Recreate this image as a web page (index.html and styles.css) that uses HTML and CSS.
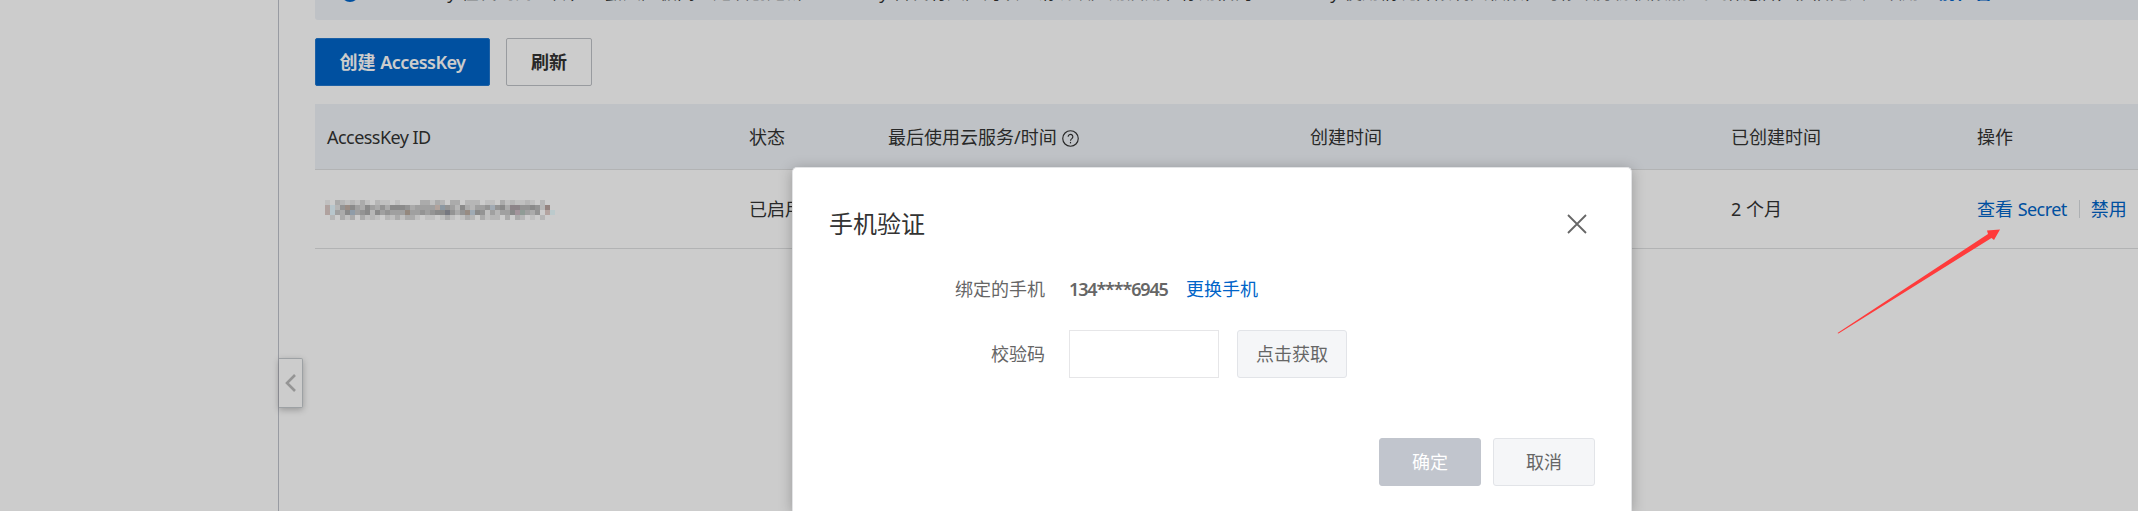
FILE: index.html
```html
<!DOCTYPE html>
<html lang="zh-CN">
<head>
    <meta charset="UTF-8">
    <meta name="viewport" content="width=device-width, initial-scale=1.0">
    <title>AccessKey 管理</title>
    <link rel="stylesheet" href="styles.css">
</head>
<body>
    <div class="page">
        <aside class="sidebar"></aside>
        <main class="content">
            <div class="notice">
                <span class="notice-icon"></span>
                <p class="notice-text"><span class="part"><span class="en">AccessKey</span> 在代码网上传，泄露风险极高。建议创建新</span><span class="part part-2"><span class="en">AccessKey</span> 替代有风险的项。请确认应用启用和停用旧的</span><span class="part"><span class="en">AccessKey</span> 使用情况并限制其权限，可修改身份权限加上控措施后，依旧无法继续用。<a href="#">前往管理</a></span></p>
            </div>

            <div class="toolbar">
                <button class="btn btn-primary">创建 <span class="en">AccessKey</span></button>
                <button class="btn btn-normal">刷新</button>
            </div>

            <div class="table">
                <div class="row head">
                    <div class="cell"><span class="en">AccessKey ID</span></div>
                    <div class="cell">状态</div>
                    <div class="cell">最后使用云服务/时间
                        <svg class="help" viewBox="0 0 16 16">
                            <circle cx="8" cy="8" r="7.3"/>
                            <path d="M5.8 6.3a2.2 2.2 0 1 1 3.5 1.8C8.3 8.8 8 9.1 8 10"/>
                            <path d="M8 11.2v1.4"/>
                        </svg>
                    </div>
                    <div class="cell">创建时间</div>
                    <div class="cell">已创建时间</div>
                    <div class="cell">操作</div>
                </div>
                <div class="row">
                    <div class="cell"><svg id="maskedId" class="masked" width="230" height="20"></svg></div>
                    <div class="cell">已启用</div>
                    <div class="cell"></div>
                    <div class="cell"></div>
                    <div class="cell">2 个月</div>
                    <div class="cell actions"><a href="#">查看 <span class="en">Secret</span></a><i class="divider"></i><a href="#">禁用</a></div>
                </div>
            </div>
        </main>
        <div class="collapse">
            <svg width="12" height="20" viewBox="0 0 12 20"><path d="M10 2L2 10l8 8"/></svg>
        </div>
    </div>

    <!-- Backdrop -->
    <div class="overlay"></div>

    <!-- Dialog -->
    <div class="dialog">
        <div class="dialog-header">
            <h2>手机验证</h2>
            <svg class="close" width="20" height="20" viewBox="0 0 20 20"><path d="M1 1l18 18M19 1L1 19"/></svg>
        </div>
        <div class="form">
            <div class="form-row phone-row">
                <label>绑定的手机</label>
                <b class="phone">134****6945</b>
                <a href="#">更换手机</a>
            </div>
            <div class="form-row">
                <label>校验码</label>
                <input type="text" class="code">
                <button class="btn2 btn-get">点击获取</button>
            </div>
        </div>
        <div class="dialog-footer">
            <button class="btn2 btn-ok">确定</button>
            <button class="btn2">取消</button>
        </div>
    </div>

    <svg class="arrow" width="164" height="105" viewBox="0 0 164 105">
        <path d="M0.5 104L151 5L150 1.500L163 0.500L157 11L154.500 9L1.500 104.500Z"/>
    </svg>

    <script>
        // Mosaic over the key id, one digit per 5px block
        const rows = [
            '1032121310211010000331320330222011031211210202',
            '4125364364353666534444555426324453563425565254',
            '4143634562645444544545663535576514244625435052',
            '0203130312102131331011013101320312203032010201'
        ];
        // warm / cool tints
        const tints = { '0,1': '#b0a29f', '0,2': '#b0a29f', '1,1': '#b9c6d0', '1,2': '#b9c6d0', '4,1': '#9a8d84', '5,2': '#8f9ca8', '16,2': '#94897e', '22,1': '#b2a39d', '23,1': '#8d98a2', '24,2': '#767980', '28,2': '#978b82', '29,2': '#9faab5', '33,1': '#a2abb4', '37,1': '#8c8488', '38,1': '#8c8488', '38,2': '#a3949b', '39,2': '#909d96', '44,1': '#94837f', '44,2': '#b5a4a0', '45,2': '#bccad2' };
        const masked = document.getElementById('maskedId');

        rows.forEach((row, y) => {
            for (let x = 0; x < row.length; x++) {
                const level = 204 - row[x] * 11;
                const rect = document.createElementNS('http://www.w3.org/2000/svg', 'rect');
                if (x === 45 && y !== 2) continue;
                rect.setAttribute('x', x * 5);
                rect.setAttribute('y', y * 5);
                rect.setAttribute('width', 5);
                rect.setAttribute('height', 5);
                rect.setAttribute('fill', tints[x + ',' + y] || `rgb(${level}, ${level}, ${level})`);
                masked.appendChild(rect);
            }
        });
    </script>
</body>
</html>
```
FILE: styles.css
```css
* {
    box-sizing: border-box;
}

body {
    margin: 0;
    height: 511px;
    overflow: hidden;
    position: relative;
    font-family: 'Noto Sans', 'Noto Sans CJK SC', sans-serif;
    font-size: 18px;
    line-height: 26px;
    color: #333;
    background-color: #fff;
}

a {
    color: #0064c8;
    text-decoration: none;
}

button {
    font-family: inherit;
    font-size: 18px;
    line-height: 26px;
    white-space: nowrap;
}

.en {
    letter-spacing: -0.55px;
}

.page {
    display: flex;
    height: 511px;
    position: relative;
}

.sidebar {
    width: 279px;
    flex: none;
    border-right: 1px solid #bfc2cb;
}

.content {
    flex: 1;
    min-width: 0;
    padding-left: 36px;
}

/* Notice bar */
.notice {
    height: 20px;
    padding-left: 12px;
    background-color: #eff3f8;
    border-radius: 0 0 0 3px;
    display: flex;
    align-items: flex-end;
    overflow: hidden;
}

.notice-icon {
    width: 18px;
    height: 18px;
    margin: 0 12px 18px 14px;
    flex: none;
    border-radius: 50%;
    background-color: #0064c8;
}

.notice-text {
    margin: 0 0 17px;
    display: flex;
    line-height: 22px;
    white-space: nowrap;
}

.notice .en {
    letter-spacing: -0.1px;
}

.part {
    flex: none;
    width: 432px;
}

.part-2 {
    width: 451px;
}

.notice a {
    font-weight: bold;
}

/* Buttons above the table */
.toolbar {
    display: flex;
    gap: 16px;
    padding: 18px 0;
}

.btn {
    height: 48px;
    padding: 0;
    font-weight: 600;
    border-radius: 2px;
}

.btn-primary {
    width: 175px;
    color: #fff;
    background-color: #0064c8;
    border: 1px solid #2379cf;
}

.btn-normal {
    width: 86px;
    color: #333;
    background-color: #fff;
    border: 1px solid #bfc2c7;
}

/* Table */
.row {
    display: grid;
    grid-template-columns: 422px 139px 422px 421px 246px 173px;
    align-items: center;
    height: 79px;
    border-bottom: 1px solid #dfe0e2;
}

.head {
    height: 66px;
    background-color: #eff3f8;
}

.cell {
    padding-left: 12px;
    white-space: nowrap;
}

.help {
    width: 17px;
    height: 17px;
    margin-left: 1px;
    vertical-align: -3px;
    fill: none;
    stroke: #333;
    stroke-width: 1.1;
}

.masked {
    display: block;
    margin-left: -2px;
    margin-top: 1px;
    filter: brightness(1.25);
}

.actions {
    display: flex;
    align-items: center;
}

.divider {
    width: 1px;
    height: 18px;
    margin: 0 11px 0 12px;
    background-color: #d9dce0;
}

.collapse {
    position: absolute;
    left: 279px;
    top: 358px;
    width: 24px;
    height: 50px;
    display: flex;
    align-items: center;
    justify-content: center;
    border: 1px solid #c5cacd;
    border-left: none;
    border-radius: 0 2px 2px 0;
    background-color: #fff;
    box-shadow: 0 2px 6px rgba(0, 0, 0, 0.25);
}

.collapse svg {
    fill: none;
    stroke: #bbb;
    stroke-width: 2.6;
}

.overlay {
    position: absolute;
    inset: 0;
    background-color: rgba(0, 0, 0, 0.2);
}

/* Dialog */
.dialog {
    position: absolute;
    left: 792px;
    top: 167px;
    width: 840px;
    height: 344px;
    padding: 0 36px;
    border: 1px solid #e3e4e6;
    border-bottom: none;
    border-radius: 5px 5px 0 0;
    background-color: #fff;
    box-shadow: 0 2px 14px rgba(0, 0, 0, 0.25);
}

.dialog-header {
    display: flex;
    justify-content: space-between;
    align-items: center;
    height: 112px;
}

.dialog-header h2 {
    margin: 0;
    font-size: 24px;
    font-weight: normal;
    line-height: 36px;
}

.close {
    margin-right: 8px;
    fill: none;
    stroke: #666;
    stroke-width: 1.8;
}

.form {
    color: #666;
    padding-left: 80px;
}

.form-row {
    display: flex;
    align-items: center;
    height: 48px;
}

.form-row label {
    width: 136px;
    margin-right: 24px;
    text-align: right;
}

.phone-row {
    height: 18px;
    margin-bottom: 32px;
}

.phone {
    width: 117px;
    font-weight: 600;
    letter-spacing: -1.15px;
}

.code {
    width: 150px;
    height: 48px;
    margin-right: 18px;
    border: 1px solid #e6e6e8;
    background-color: #fff;
}

.btn2 {
    width: 102px;
    height: 48px;
    padding: 0;
    color: #666;
    background-color: #f5f6f8;
    border: 1px solid #e2e4e8;
    border-radius: 3px;
}

.btn-get {
    width: 110px;
}

.dialog-footer {
    display: flex;
    justify-content: flex-end;
    gap: 12px;
    margin-top: 60px;
}

.btn-ok {
    color: #fff;
    background-color: #c1c5cd;
    border-color: #c1c5cd;
}

/* Pointer to the "view secret" link */
.arrow {
    position: absolute;
    left: 1837px;
    top: 229px;
    fill: #ff3b3b;
}
```
